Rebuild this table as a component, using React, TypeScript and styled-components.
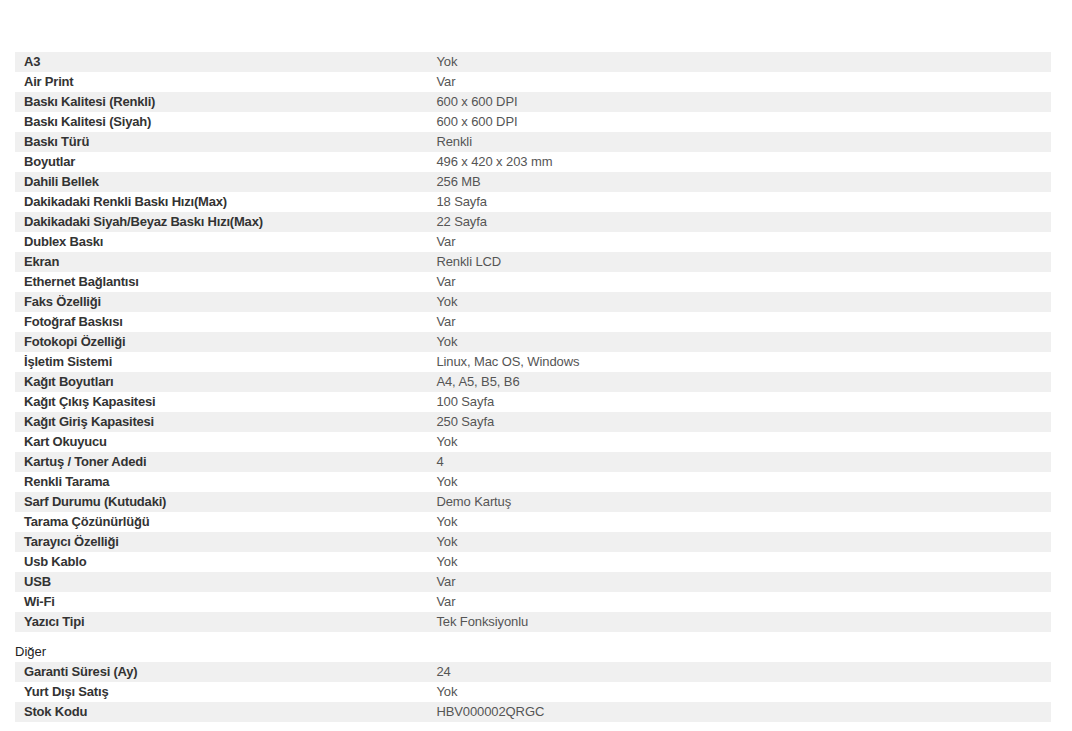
import React from "react";
import styled, { createGlobalStyle } from "styled-components";

const Global = createGlobalStyle`
  html, body { margin: 0; padding: 0; background: #fff; }
  body { font-family: "Liberation Sans", Arial, sans-serif; }
`;

const Page = styled.div`
  padding: 52px 21px 0 15px;
`;

const Section = styled.section`
  display: flex;
  flex-direction: column;
`;

const SectionTitle = styled.div`
  margin-top: 10px;
  height: 20px;
  line-height: 20px;
  font-size: 13px;
  color: #222;
`;

const Row = styled.div<{ $shaded: boolean }>`
  display: grid;
  grid-template-columns: 40% 60%;
  height: 20px;
  line-height: 20px;
  font-size: 13px;
  background: ${(p) => (p.$shaded ? "#f0f0f0" : "#fff")};
`;

const Key = styled.div`
  padding-left: 9px;
  font-weight: bold;
  letter-spacing: -0.2px;
  color: #333;
  white-space: nowrap;
`;

const Value = styled.div`
  padding-left: 7px;
  letter-spacing: -0.1px;
  color: #555;
  white-space: nowrap;
`;

const main: [string, string][] = [
  ["A3", "Yok"],
  ["Air Print", "Var"],
  ["Baskı Kalitesi (Renkli)", "600 x 600 DPI"],
  ["Baskı Kalitesi (Siyah)", "600 x 600 DPI"],
  ["Baskı Türü", "Renkli"],
  ["Boyutlar", "496 x 420 x 203 mm"],
  ["Dahili Bellek", "256 MB"],
  ["Dakikadaki Renkli Baskı Hızı(Max)", "18 Sayfa"],
  ["Dakikadaki Siyah/Beyaz Baskı Hızı(Max)", "22 Sayfa"],
  ["Dublex Baskı", "Var"],
  ["Ekran", "Renkli LCD"],
  ["Ethernet Bağlantısı", "Var"],
  ["Faks Özelliği", "Yok"],
  ["Fotoğraf Baskısı", "Var"],
  ["Fotokopi Özelliği", "Yok"],
  ["İşletim Sistemi", "Linux, Mac OS, Windows"],
  ["Kağıt Boyutları", "A4, A5, B5, B6"],
  ["Kağıt Çıkış Kapasitesi", "100 Sayfa"],
  ["Kağıt Giriş Kapasitesi", "250 Sayfa"],
  ["Kart Okuyucu", "Yok"],
  ["Kartuş / Toner Adedi", "4"],
  ["Renkli Tarama", "Yok"],
  ["Sarf Durumu (Kutudaki)", "Demo Kartuş"],
  ["Tarama Çözünürlüğü", "Yok"],
  ["Tarayıcı Özelliği", "Yok"],
  ["Usb Kablo", "Yok"],
  ["USB", "Var"],
  ["Wi-Fi", "Var"],
  ["Yazıcı Tipi", "Tek Fonksiyonlu"],
];

const other: [string, string][] = [
  ["Garanti Süresi (Ay)", "24"],
  ["Yurt Dışı Satış", "Yok"],
  ["Stok Kodu", "HBV000002QRGC"],
];

const Rows = ({ items }: { items: [string, string][] }) => (
  <>
    {items.map(([k, v], i) => (
      <Row key={k} $shaded={i % 2 === 0}>
        <Key>{k}</Key>
        <Value>{v}</Value>
      </Row>
    ))}
  </>
);

export default function App() {
  return (
    <>
      <Global />
      <Page>
        <Section>
          <Rows items={main} />
        </Section>
        <Section>
          <SectionTitle>Diğer</SectionTitle>
          <Rows items={other} />
        </Section>
      </Page>
    </>
  );
}
